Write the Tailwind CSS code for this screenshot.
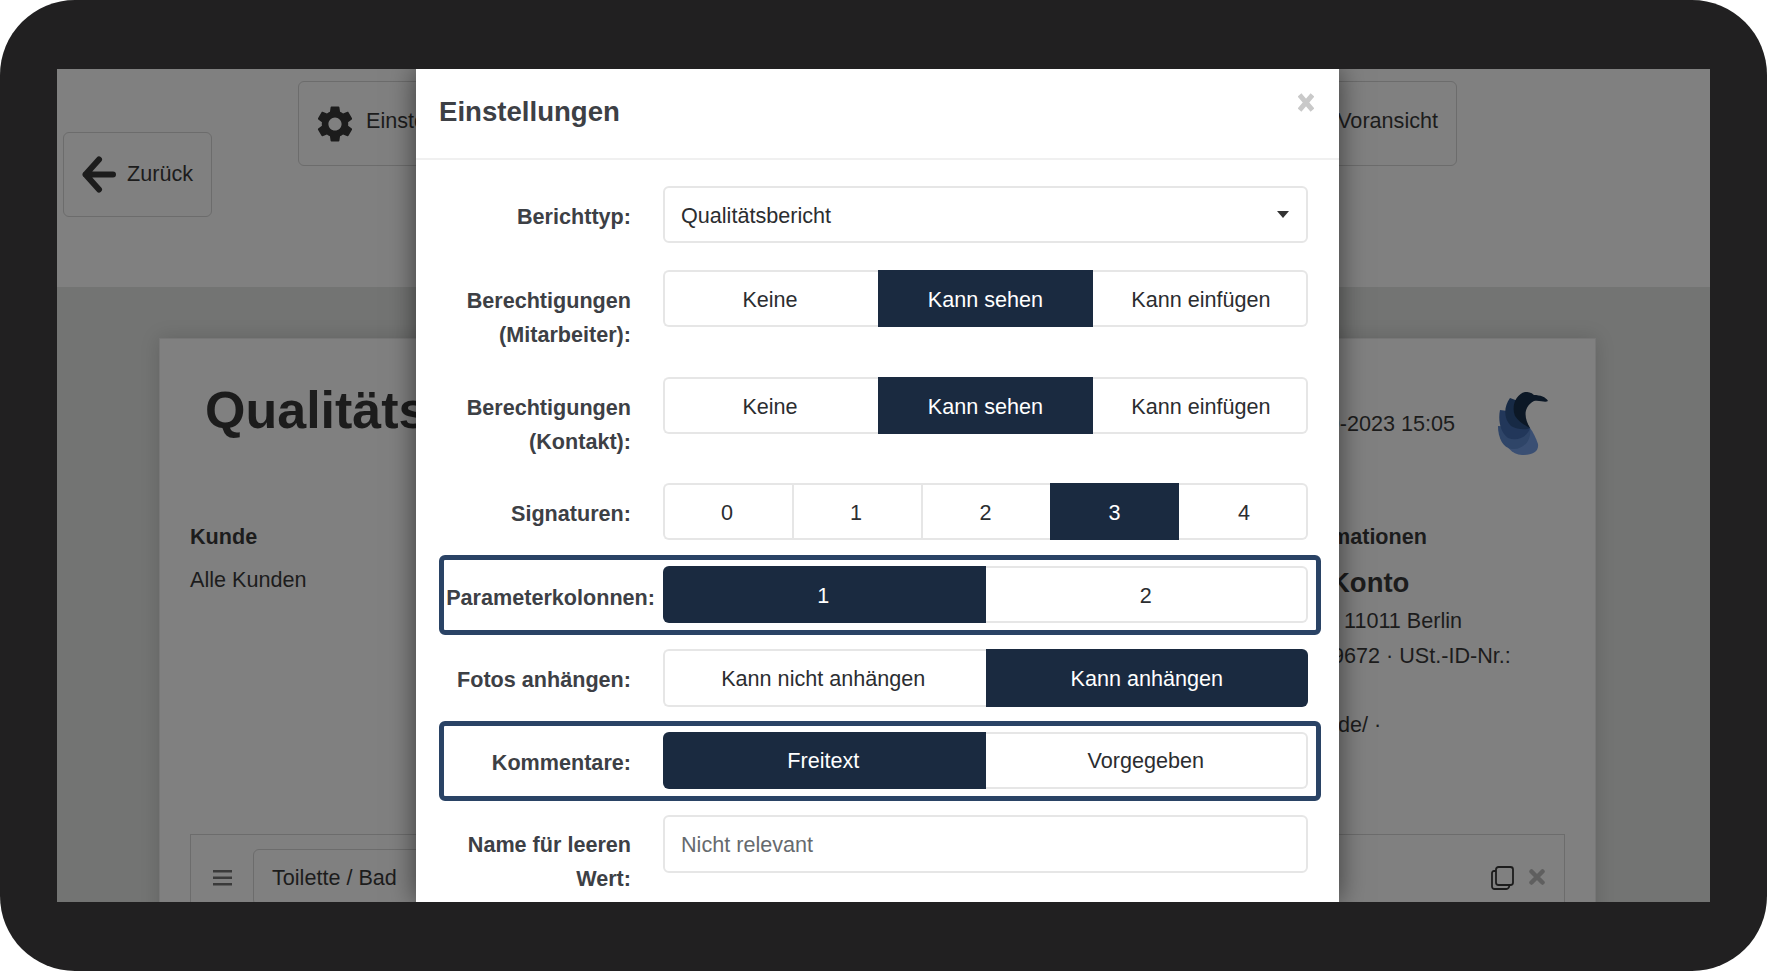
<!DOCTYPE html>
<html lang="de">
<head>
    <meta charset="UTF-8">
    <meta name="viewport" content="width=device-width, initial-scale=1.0">
    <title>Einstellungen</title>
    <script src="https://cdn.jsdelivr.net/npm/@tailwindcss/browser@4"></script>
</head>
<body class="bg-white font-['Liberation_Sans',sans-serif] text-[21.6px] leading-[34px] text-[#1c1c1c]">

<div class="w-[1767px] h-[971px] bg-[#212021] rounded-[75px] pt-[69px] px-[57px] overflow-hidden">
    <div class="relative h-[833px] overflow-hidden bg-[#737473]">

        <!-- Page behind the dialog -->
        <div class="h-[218px] bg-[#808080] flex items-start pl-[6px] pr-[253px]">
            <div class="mt-[63px] w-[149px] h-[85px] border border-[#6c6c6c] rounded-md flex items-center pl-[18px] gap-[10px]">
                <svg class="w-[35px] h-[37px]" viewBox="0 0 35 37" fill="none" stroke="#1c1c1c" stroke-width="6" stroke-linecap="round" stroke-linejoin="round"><path d="M17 3.500 L3.500 18.500 L17 33.500 M3.500 18.500 H31"/></svg>
                <span class="mb-[2px]">Zurück</span>
            </div>
            <div class="ml-[86px] mt-[12px] w-[260px] h-[85px] border border-[#6c6c6c] rounded-md flex items-center pl-[14px] gap-[9px]">
                <svg class="w-[44px] h-[44px]" viewBox="0 0 24 24" fill="#1c1c1c"><path d="M19.14 12.94c.04-.3.06-.61.06-.94 0-.32-.02-.64-.07-.94l2.03-1.58c.18-.14.23-.41.12-.61l-1.92-3.32c-.12-.22-.37-.29-.59-.22l-2.39.96c-.5-.38-1.03-.7-1.62-.94l-.36-2.54c-.04-.24-.24-.41-.48-.41h-3.84c-.24 0-.43.17-.47.41l-.36 2.54c-.59.24-1.13.57-1.62.94l-2.39-.96c-.22-.08-.47 0-.59.22L2.74 8.87c-.12.21-.08.47.12.61l2.03 1.58c-.05.3-.09.63-.09.94s.02.64.07.94l-2.03 1.58c-.18.14-.23.41-.12.61l1.92 3.32c.12.22.37.29.59.22l2.39-.96c.5.38 1.03.7 1.62.94l.36 2.54c.05.24.24.41.48.41h3.84c.24 0 .44-.17.47-.41l.36-2.54c.59-.24 1.13-.56 1.62-.94l2.39.96c.22.08.47 0 .59-.22l1.92-3.32c.12-.22.07-.47-.12-.61l-2.01-1.58zM12 15.6c-1.98 0-3.6-1.62-3.6-3.6s1.62-3.6 3.6-3.6 3.6 1.62 3.6 3.6-1.62 3.6-3.6 3.6z"/></svg>
                <span class="mb-[5px]">Einstellungen</span>
            </div>
            <div class="ml-auto mt-[12px] w-[230px] h-[85px] border border-[#6c6c6c] rounded-md flex items-center justify-end pr-[18px]">
                <span class="mb-[5px]">Voransicht</span>
            </div>
        </div>

        <div class="pt-[51px] pl-[102px] pr-[114px]">
            <div class="h-[600px] bg-[#808080] border border-[#777777] shadow-[0_0_18px_rgba(0,0,0,0.15)] px-[30px]">
                <!-- Report header -->
                <div class="h-[170px] flex items-start">
                    <h2 class="ml-[15px] mt-[41px] text-[52px] leading-[60px] font-bold">Qualitätsbericht</h2>
                    <span class="ml-auto mt-[68px]">01-10-2023 15:05</span>
                    <svg class="ml-[43px] mt-[53px] mr-[17px] w-[50px] h-[63px]" viewBox="0 0 50 63">
                        <path fill="#3a4f73" d="M3 38 C6 54 14 63 24 63 C34 63 41 60 40 52 C38 46 35 40 32 36 Z"/>
                        <path fill="#2f4568" d="M0 34 C0 46 5 56 14 57 C24 58 34 50 32 36 Z"/>
                        <path fill="#22375a" d="M2 18 C0 28 2 40 10 46 C20 50 30 44 32 36 C26 30 24 24 25 21 Z"/>
                        <path fill="#172a45" d="M12 6 C6 14 5 26 13 34 C20 38 28 38 32 36 C26 28 24 20 28 12 Z"/>
                        <path fill="#0c1826" d="M27 0 C18 2 13 14 17 24 C21 30 28 34 32 36 C26 26 25 15 36 9 C42 8 47 11 50 9 C48 5 42 3 36 3 C33 0 30 0 27 0 Z"/>
                    </svg>
                </div>

                <div class="h-[325px] pt-[11px] flex justify-between">
                    <div>
                        <div class="font-bold">Kunde</div>
                        <div class="mt-[9px]">Alle Kunden</div>
                    </div>
                    <div class="w-[303px] whitespace-nowrap">
                        <div class="pl-[21px] font-bold">Informationen</div>
                        <div class="mt-[12px] pl-[68px] text-[27.500px] font-bold">Konto</div>
                        <div class="mt-[4px] pl-[82px]">11011 Berlin</div>
                        <div class="pl-[70px] mt-px">9672 · USt.-ID-Nr.:</div>
                        <div class="pl-[76px] mt-[35px]">de/ ·</div>
                    </div>
                </div>

                <!-- Section row -->
                <div class="h-[120px] border border-[#6c6c6c] flex items-start pt-[14px] pl-[22px] pr-[19px]">
                    <svg class="mt-[21px] w-[19px] h-[16px]" viewBox="0 0 19 16" fill="#3a3a3a"><rect width="19" height="2.500"/><rect y="6.500" width="19" height="2.500"/><rect y="13" width="19" height="2.500"/></svg>
                    <div class="ml-[21px] w-[400px] h-[57px] border border-[#6c6c6c] rounded-md pl-[18px] flex items-center">Toilette / Bad</div>
                    <svg class="ml-auto mt-[17px] w-[23px] h-[24px]" viewBox="0 0 23 24" fill="none" stroke="#1c1c1c" stroke-width="1.800"><rect x="5" y="1" width="17" height="18" rx="2.500"/><path d="M5 5 H3 A2 2 0 0 0 1 7 V20.500 A2.500 2.500 0 0 0 3.500 23 H15 A3 3 0 0 0 18 19"/></svg>
                    <svg class="ml-[15px] mt-[20px] w-[16px] h-[16px]" viewBox="0 0 16 16" stroke="#5f5f5f" stroke-width="4.500" stroke-linecap="round"><path d="M2.500 2.500 L13.500 13.500 M13.500 2.500 L2.500 13.500"/></svg>
                </div>
            </div>
        </div>

        <!-- Settings dialog -->
        <div class="absolute top-0 left-[359px] w-[923px] h-[833px] overflow-hidden bg-white shadow-[0_0_26px_rgba(0,0,0,0.55)] text-[#3d4045]">
            <div class="h-[91px] border-b-2 border-[#f0f0f0] relative pl-[23px] pt-[23px]">
                <h1 class="text-[27.600px] leading-[40px] font-bold">Einstellungen</h1>
                <svg class="absolute top-[24px] right-[25px] w-[16px] h-[19px]" viewBox="0 0 16 19" stroke="#c9c9c9" stroke-width="5"><path d="M1.500 2 L14.500 17 M14.500 2 L1.500 17"/></svg>
            </div>

            <div class="pt-[26px] pl-[23px] w-[905px]">
                <!-- Berichttyp -->
                <div class="flex">
                    <label class="w-[224px] pr-[32px] pt-[14px] text-right font-bold">Berichttyp:</label>
                    <div class="w-[645px] h-[57px] border-2 border-[#e6e6e6] rounded-md pl-[16px] pr-[17px] flex items-center justify-between text-[#2b2d30]">
                        <span class="pt-[2px]">Qualitätsbericht</span>
                        <svg class="w-[12px] h-[7px]" viewBox="0 0 12 7" fill="#333"><path d="M0 0 H12 L6 7 Z"/></svg>
                    </div>
                </div>

                <!-- Berechtigungen Mitarbeiter -->
                <div class="flex mt-[27px]">
                    <label class="w-[224px] h-[81px] pr-[32px] pt-[14px] text-right font-bold">Berechtigungen<br>(Mitarbeiter):</label>
                    <div class="w-[645px] h-[57px] grid grid-cols-3 grid-rows-[57px] text-[#2b2d30]">
                        <div class="flex items-center justify-center pt-[3px] pr-[3px] border-2 border-r-0 border-[#e6e6e6] rounded-l-md">Keine</div>
                        <div class="flex items-center justify-center pt-[3px] bg-[#1a2a40] text-white">Kann sehen</div>
                        <div class="flex items-center justify-center pt-[3px] pl-[3px] border-2 border-l-0 border-[#e6e6e6] rounded-r-md">Kann einfügen</div>
                    </div>
                </div>

                <!-- Berechtigungen Kontakt -->
                <div class="flex mt-[26px]">
                    <label class="w-[224px] h-[81px] pr-[32px] pt-[14px] text-right font-bold">Berechtigungen<br>(Kontakt):</label>
                    <div class="w-[645px] h-[57px] grid grid-cols-3 grid-rows-[57px] text-[#2b2d30]">
                        <div class="flex items-center justify-center pt-[3px] pr-[3px] border-2 border-r-0 border-[#e6e6e6] rounded-l-md">Keine</div>
                        <div class="flex items-center justify-center pt-[3px] bg-[#1a2a40] text-white">Kann sehen</div>
                        <div class="flex items-center justify-center pt-[3px] pl-[3px] border-2 border-l-0 border-[#e6e6e6] rounded-r-md">Kann einfügen</div>
                    </div>
                </div>

                <!-- Signaturen -->
                <div class="flex mt-[25px]">
                    <label class="w-[224px] pr-[32px] pt-[14px] text-right font-bold">Signaturen:</label>
                    <div class="w-[645px] h-[57px] grid grid-cols-5 grid-rows-[57px] text-[#2b2d30]">
                        <div class="flex items-center justify-center pt-[3px] pr-[3px] border-2 border-r-0 border-[#e6e6e6] rounded-l-md">0</div>
                        <div class="flex items-center justify-center pt-[3px] pr-[3px] border-2 border-r-0 border-[#e6e6e6]">1</div>
                        <div class="flex items-center justify-center pt-[3px] pr-[2px] border-2 border-r-0 border-[#e6e6e6]">2</div>
                        <div class="flex items-center justify-center pt-[3px] bg-[#1a2a40] text-white">3</div>
                        <div class="flex items-center justify-center pt-[3px] pl-[3px] border-2 border-l-0 border-[#e6e6e6] rounded-r-md">4</div>
                    </div>
                </div>

                <!-- Parameterkolonnen (highlighted) -->
                <div class="flex mt-[15px] h-[80px] w-[882px] border-[5px] border-[#2a4365] rounded-md pt-[6px]">
                    <label class="w-[219px] pr-[8px] pt-[15px] text-right font-bold">Parameterkolonnen:</label>
                    <div class="w-[645px] h-[57px] grid grid-cols-2 grid-rows-[57px] text-[#2b2d30]">
                        <div class="flex items-center justify-center pt-[2px] pr-[2px] bg-[#1a2a40] text-white rounded-l-md">1</div>
                        <div class="flex items-center justify-center pt-[2px] border-2 border-l-0 border-[#e6e6e6] rounded-r-md">2</div>
                    </div>
                </div>

                <!-- Fotos -->
                <div class="flex mt-[14px]">
                    <label class="w-[224px] pr-[32px] pt-[14px] text-right font-bold">Fotos anhängen:</label>
                    <div class="w-[645px] h-[58px] grid grid-cols-2 grid-rows-[58px] text-[#2b2d30]">
                        <div class="flex items-center justify-center pt-[1px] pr-[4px] border-2 border-r-0 border-[#e6e6e6] rounded-l-md">Kann nicht anhängen</div>
                        <div class="flex items-center justify-center pt-[1px] bg-[#1a2a40] text-white rounded-r-md">Kann anhängen</div>
                    </div>
                </div>

                <!-- Kommentare (highlighted) -->
                <div class="flex mt-[14px] h-[80px] w-[882px] border-[5px] border-[#2a4365] rounded-md pt-[6px]">
                    <label class="w-[219px] pr-[32px] pt-[14px] text-right font-bold">Kommentare:</label>
                    <div class="w-[645px] h-[57px] grid grid-cols-2 grid-rows-[57px] text-[#2b2d30]">
                        <div class="flex items-center justify-center pt-[1px] pr-[2px] bg-[#1a2a40] text-white rounded-l-md">Freitext</div>
                        <div class="flex items-center justify-center pt-[1px] border-2 border-l-0 border-[#e6e6e6] rounded-r-md">Vorgegeben</div>
                    </div>
                </div>

                <!-- Leerwert -->
                <div class="flex mt-[14px]">
                    <label class="w-[224px] pr-[32px] pt-[13px] text-right font-bold">Name für leeren<br>Wert:</label>
                    <input type="text" placeholder="Nicht relevant" class="w-[645px] h-[58px] border-2 border-[#e6e6e6] rounded-md pl-[16px] pt-[1px] outline-none placeholder:text-[#666a6e]">
                </div>
            </div>
        </div>

    </div>
</div>

</body>
</html>
